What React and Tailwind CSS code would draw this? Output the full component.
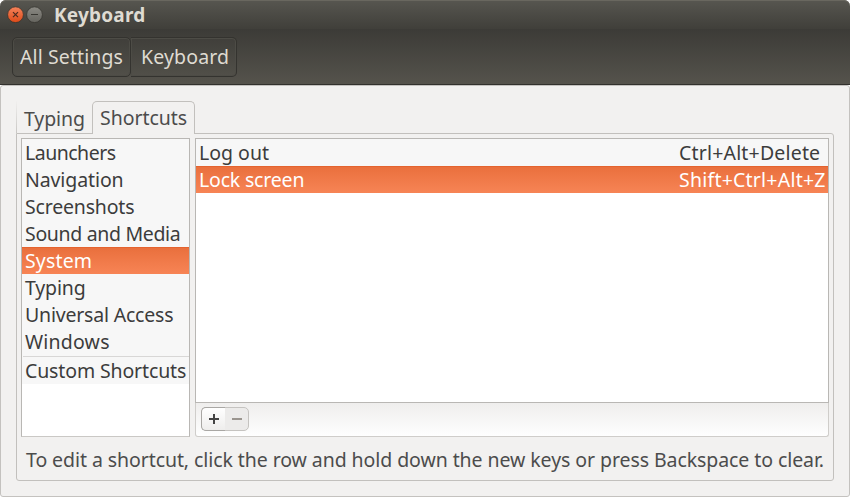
import React from "react";

const categories = [
  { name: "Launchers", spacing: "tracking-[-0.5px]" },
  { name: "Navigation", spacing: "tracking-[-0.1px]" },
  { name: "Screenshots", spacing: "tracking-[-0.18px]" },
  { name: "Sound and Media", spacing: "tracking-[-0.33px]" },
  { name: "System", spacing: "tracking-[0.15px]", selected: true },
  { name: "Typing", spacing: "tracking-[-0.15px]" },
  { name: "Universal Access", spacing: "tracking-[-0.2px]" },
  { name: "Windows", spacing: "tracking-[0.2px]" },
];

const selectedRow = "bg-linear-to-b from-[#e96f3c] to-[#f78455] text-white shadow-[inset_0_1px_0_#e4632f]";

function TitleBar() {
  return (
    <header className="flex h-[29px] shrink-0 items-center rounded-t-md bg-linear-to-b from-[#575650] to-[#403f3a] pl-[7px] shadow-[inset_0_1px_0_#69675f]">
      <svg className="size-[17px]" viewBox="0 0 17 17">
        <defs>
          <linearGradient id="close" x2="0" y2="1">
            <stop stopColor="#f5835b" />
            <stop offset="1" stopColor="#dd4a18" />
          </linearGradient>
        </defs>
        <circle cx="8.5" cy="8.7" r="7.9" fill="url(#close)" stroke="#35342f" strokeWidth="0.8" />
        <path d="M6 6.2l5 5M11 6.2l-5 5" stroke="#4a2a1f" strokeWidth="1.2" />
      </svg>
      <svg className="ml-[2px] size-[17px]" viewBox="0 0 17 17">
        <defs>
          <linearGradient id="minimize" x2="0" y2="1">
            <stop stopColor="#8b8a84" />
            <stop offset="1" stopColor="#65645e" />
          </linearGradient>
        </defs>
        <circle cx="8.5" cy="8.7" r="7.9" fill="url(#minimize)" stroke="#35342f" strokeWidth="0.8" />
        <path d="M5 8.5h7" stroke="#383732" />
      </svg>
      <h1 className="ml-[11px] pt-[2px] text-[19px] font-bold tracking-[0.2px] text-[#dfdbd2]">Keyboard</h1>
    </header>
  );
}

function Toolbar() {
  return (
    <nav className="flex h-14 shrink-0 border-b border-[#32312d] bg-linear-to-b from-[#3c3b37] to-[#55534c] px-3 pt-2 text-[#dfdbd2]">
      <button className="flex h-10 w-[119px] items-center rounded-[5px] border border-[#34332f] pb-px pl-[7px] tracking-[0.1px] whitespace-nowrap shadow-[inset_0_0_0_1px_#4d4c46]">
        All Settings
      </button>
      <button className="flex h-10 w-[106px] items-center rounded-r-[5px] border border-l-0 border-[#34332f] pb-px pl-[10px] tracking-[0.15px] whitespace-nowrap shadow-[inset_0_0_0_1px_#4d4c46]">
        Keyboard
      </button>
    </nav>
  );
}

function Tabs() {
  return (
    <div className="relative z-10 -mb-px flex h-[33px] text-[#4c4c4c]">
      <button className="h-8 w-[76px] border-l border-transparent pt-[3px] pl-[7px] text-left tracking-[-0.1px] [border-image:linear-gradient(to_bottom,transparent,#c8c6c3)_1]">
        Typing
      </button>
      <button className="flex h-[33px] w-[103px] items-center rounded-t-[5px] border border-b-0 border-[#c2c0bd] bg-[#f2f1f0] pb-[2px] pl-[7px] tracking-[-0.03px]">
        Shortcuts
      </button>
    </div>
  );
}

function CategoryList() {
  return (
    <ul className="h-[299px] w-[169px] shrink-0 border border-[#b9b7b4] border-b-[#cac8c5] bg-white">
      {categories.map(({ name, spacing, selected }) => (
        <li
          key={name}
          className={`flex h-[27px] items-center pl-[3px] whitespace-nowrap ${spacing} ${selected ? selectedRow : "bg-[#f7f7f7]"}`}
        >
          {name}
        </li>
      ))}
      <li className="bg-[#f7f7f7] pt-px pl-px">
        <hr className="border-[#d8d7d6]" />
      </li>
      <li className="flex h-[27px] items-center bg-[#f7f7f7] pl-[3px] tracking-[-0.13px] whitespace-nowrap">
        Custom Shortcuts
      </li>
    </ul>
  );
}

function ShortcutList() {
  return (
    <div className="flex w-[634px] flex-col">
      <div className="h-[265px] border border-[#b9b7b4] bg-white">
        <div className="flex h-[27px] items-center bg-[#f7f7f7] pl-[3px] whitespace-nowrap">
          <span className="w-[480px]">Log out</span>
          <span className="tracking-[0.18px]">Ctrl+Alt+Delete</span>
        </div>
        <div className={`flex h-[27px] items-center pl-[3px] whitespace-nowrap ${selectedRow}`}>
          <span className="w-[480px] tracking-[-0.18px]">Lock screen</span>
          <span className="tracking-[0.22px]">Shift+Ctrl+Alt+Z</span>
        </div>
      </div>
      <div className="flex h-[34px] items-start rounded-b-[3px] border border-t-0 border-[#cfcdca] bg-linear-to-b from-[#efeeed] to-[#fefefe] pt-1 pl-[5px]">
        <div className="flex h-6 w-12 rounded-[5px] border border-[#c5c3c0] bg-[#ecebea]">
          <button
            className="-my-px -ml-px flex w-6 items-center justify-center rounded-l-[5px] border border-r-0 border-[#a9a7a4] bg-linear-to-b from-white to-[#eeedec]"
            aria-label="Add"
          >
            <svg className="size-[10px]" viewBox="0 0 10 10">
              <path d="M0 5h10M5 0v10" stroke="#444" strokeWidth="2" />
            </svg>
          </button>
          <button className="flex flex-1 items-center justify-center" aria-label="Remove">
            <svg className="size-[10px]" viewBox="0 0 10 10">
              <path d="M0 5h10" stroke="#9a958f" strokeWidth="2" />
            </svg>
          </button>
        </div>
      </div>
    </div>
  );
}

export default function App() {
  return (
    <main className="flex h-[497px] w-[850px] flex-col overflow-hidden bg-white font-['Noto_Sans',sans-serif] text-[19.5px] leading-[27px] text-[#3c3c3c]">
      <TitleBar />
      <Toolbar />
      <section className="flex-1 rounded-[3px] border border-[#c4c2bf] bg-[#f2f1f0] px-[15px] pt-[15px]">
        <Tabs />
        <div className="h-[348px] w-[818px] rounded-[3px] rounded-tl-none border border-[#c2c0bd] pt-1 pl-1">
          <div className="flex gap-[5px]">
            <CategoryList />
            <ShortcutList />
          </div>
          <p className="mt-[9px] pl-[5px] tracking-[-0.075px] whitespace-nowrap text-[#4c4c4c]">
            To edit a shortcut, click the row and hold down the new keys or press Backspace to clear.
          </p>
        </div>
      </section>
    </main>
  );
}
